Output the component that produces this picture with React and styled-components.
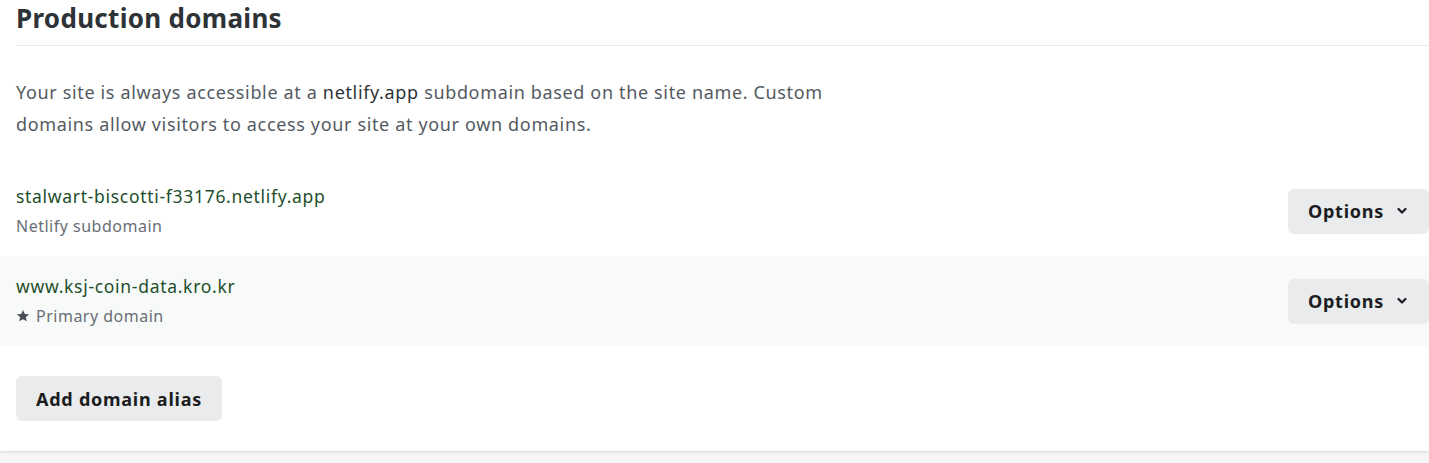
import React from "react"
import styled, { createGlobalStyle } from "styled-components"

const Colors = {
  page: "#f6f6f7",
  card: "#ffffff",
  heading: "#2e3338",
  text: "#545a61",
  link: "#1d4e2b",
  muted: "#686e75",
  highlight: "#f8faf9",
  button: "#e9ebed",
  buttonText: "#1b1d20",
  rule: "#e9e9ea"
}

const GlobalStyle = createGlobalStyle`
  html, body {
    margin: 0;
    padding: 0;
    background-color: ${Colors.page};
    font-family: "Noto Sans", "Open Sans", sans-serif;
  }
`

const Card = styled.section`
  background: ${Colors.card};
  padding: 0 0 30px 0;
  box-shadow: 0 1px 3px rgba(0, 0, 0, 0.12);
  margin-bottom: 12px;
`

const Heading = styled.h2`
  margin: 0 0 0 16px;
  padding-bottom: 9px;
  border-bottom: 1px solid ${Colors.rule};
  font-size: 26px;
  line-height: 36px;
  font-weight: 700;
  letter-spacing: 0.3px;
  color: ${Colors.heading};
`

const Description = styled.p`
  margin: 30px 0 26px 16px;
  max-width: 830px;
  font-size: 18px;
  line-height: 32px;
  letter-spacing: 0.65px;
  color: ${Colors.text};

  strong {
    font-weight: 400;
    color: ${Colors.heading};
  }
`

const List = styled.ul`
  list-style: none;
  margin: 0;
  padding: 0;
`

const Row = styled.li`
  display: flex;
  align-items: center;
  justify-content: space-between;
  height: 90px;
  padding-left: 16px;
  background: ${p => (p.$highlight ? Colors.highlight : "transparent")};
`

const Info = styled.div`
  display: flex;
  flex-direction: column;
`

const Domain = styled.a`
  font-size: 17.5px;
  line-height: 30px;
  letter-spacing: 0.7px;
  color: ${Colors.link};
  text-decoration: none;
`

const Caption = styled.span`
  display: flex;
  align-items: center;
  gap: 6px;
  font-size: 16px;
  line-height: 30px;
  letter-spacing: 0.5px;
  color: ${Colors.muted};
`

const Button = styled.button`
  display: inline-flex;
  align-items: center;
  gap: 13px;
  height: 45px;
  padding: 0 ${p => (p.$menu ? 22 : 20)}px 0 20px;
  border: 0;
  border-radius: 6px;
  background: ${Colors.button};
  color: ${Colors.buttonText};
  font-family: inherit;
  font-size: 18px;
  font-weight: 700;
  letter-spacing: 0.75px;
  cursor: pointer;
`

const AddButton = styled(Button)`
  margin: 30px 0 0 16px;
`

const Chevron = () => (
  <svg width="10" height="8" viewBox="0 0 10 8" aria-hidden="true">
    <path d="M1.5 2 L5 5.5 L8.5 2" fill="none" stroke="currentColor" strokeWidth="2.2" strokeLinecap="round" strokeLinejoin="round" />
  </svg>
)

const Star = () => (
  <svg width="14" height="14" viewBox="0 0 24 24" aria-hidden="true">
    <path d="M12 1.8l3.1 6.6 7.2.8-5.4 4.9 1.5 7.1L12 17.6l-6.4 3.6 1.5-7.1L1.7 9.2l7.2-.8z" fill="#4a4f55" />
  </svg>
)

const domains = [
  { name: "stalwart-biscotti-f33176.netlify.app", caption: "Netlify subdomain" },
  { name: "www.ksj-coin-data.kro.kr", caption: "Primary domain", primary: true }
]

export default function App() {
  return (
    <>
      <GlobalStyle />
      <Card>
        <Heading>Production domains</Heading>
        <Description>
          Your site is always accessible at a <strong>netlify.app</strong> subdomain based on the site name. Custom
          domains allow visitors to access your site at your own domains.
        </Description>
        <List>
          {domains.map(d => (
            <Row key={d.name} $highlight={d.primary}>
              <Info>
                <Domain href="#">{d.name}</Domain>
                <Caption>
                  {d.primary && <Star />}
                  {d.caption}
                </Caption>
              </Info>
              <Button $menu>
                Options
                <Chevron />
              </Button>
            </Row>
          ))}
        </List>
        <AddButton>Add domain alias</AddButton>
      </Card>
    </>
  )
}
